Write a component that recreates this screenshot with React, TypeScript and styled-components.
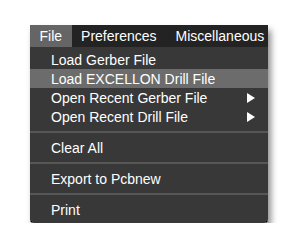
import * as React from 'react';
import styled, { createGlobalStyle } from 'styled-components';

const GlobalStyle = createGlobalStyle`
  html, body {
    margin: 0;
    background: #ffffff;
  }
  body {
    font-family: "Liberation Sans", Arial, Helvetica, sans-serif;
  }
`;

const Page = styled.div`
  padding: 25px 0 0 30px;
`;

const Menu = styled.div`
  position: relative;
  width: 238px;
  overflow: hidden;
  border-radius: 0 0 4px 4px;
  box-shadow: 3px 5px 6px rgba(0, 0, 0, 0.45);
  color: #ffffff;
  font-size: 14px;
`;

const MenuBar = styled.div`
  display: flex;
  height: 22px;
  background: #232323;
  white-space: nowrap;
`;

const MenuTitle = styled.div<{ $active?: boolean }>`
  flex: none;
  padding: 0 9.5px;
  line-height: 22px;
  background: ${(p) => (p.$active ? '#656565' : 'transparent')};
`;

const Dropdown = styled.div`
  background: #383838;
  padding: 3px 0 4px;
`;

const Item = styled.div<{ $active?: boolean }>`
  display: flex;
  align-items: center;
  justify-content: space-between;
  height: 19px;
  padding: 0 13px 0 21px;
  background: ${(p) => (p.$active ? '#6c6c6c' : 'transparent')};
`;

const Separator = styled.div`
  height: 2px;
  margin: 5px 0;
  background: #575757;
`;

const Corner = styled.span<{ $side: 'left' | 'right' }>`
  position: absolute;
  bottom: 0;
  ${(p) => p.$side}: 0;
  width: 2px;
  height: 2px;
  background: #000000;
`;

const Arrow = () => (
  <svg width="8" height="10" viewBox="0 0 8 10">
    <polygon points="0,0 8,5 0,10" fill="#ffffff" />
  </svg>
);

const titles = ['File', 'Preferences', 'Miscellaneous'];

export default function App() {
  return (
    <>
      <GlobalStyle />
      <Page>
        <Menu>
          <MenuBar>
            {titles.map((t, i) => (
              <MenuTitle key={t} $active={i === 0}>
                {t}
              </MenuTitle>
            ))}
          </MenuBar>
          <Dropdown>
            <Item>Load Gerber File</Item>
            <Item $active>Load EXCELLON Drill File</Item>
            <Item>
              Open Recent Gerber File
              <Arrow />
            </Item>
            <Item>
              Open Recent Drill File
              <Arrow />
            </Item>
            <Separator />
            <Item>Clear All</Item>
            <Separator />
            <Item>Export to Pcbnew</Item>
            <Separator />
            <Item>Print</Item>
          </Dropdown>
          <Corner $side="left" />
          <Corner $side="right" />
        </Menu>
      </Page>
    </>
  );
}
